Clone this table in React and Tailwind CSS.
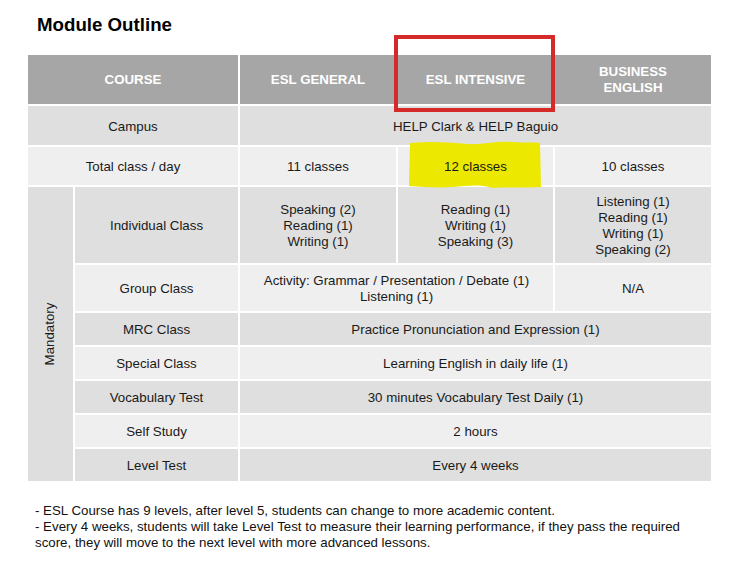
const dark = "bg-[#dfdfdf]";
const light = "bg-[#efefef]";

const Cell = ({ className = "", children }) => (
  <div className={`flex items-center justify-center text-center leading-[16px] ${className}`}>
    {children}
  </div>
);

const Highlight = () => (
  <svg className="absolute left-[10px] top-[-7px]" width="134" height="50" viewBox="0 0 134 50">
    <path
      d="M2 3 C20 1 40 2 60 4 C75 5 85 1 105 2 C118 3 126 2 132 3 L133 47 C120 48 100 47 85 48 C70 44 60 46 45 47 C30 48 15 47 1 46 Z"
      fill="#ece800"
    />
  </svg>
);

const App = () => {
  return (
    <div className="relative w-[753px] h-[585px] bg-white text-[#1a1a1a] font-['Liberation_Sans',Arial,sans-serif]">
      <h1 className="pl-[37px] pt-[14px] text-[18.7px] font-bold leading-[22px] text-black">Module Outline</h1>

      <div className="ml-[28px] mt-[19px] w-[683px] grid grid-cols-[45px_163px_156px_155px_156px] grid-rows-[49px_39px_38px_76px_46px_32px_32px_32px_32px_32px] gap-[2px] text-[13.3px]">
        {/* header */}
        <Cell className="col-span-2 bg-[#a6a6a6] text-white font-bold">COURSE</Cell>
        <Cell className="bg-[#a6a6a6] text-white font-bold">ESL GENERAL</Cell>
        <Cell className="bg-[#a6a6a6] text-white font-bold">ESL INTENSIVE</Cell>
        <Cell className="bg-[#a6a6a6] text-white font-bold">
          BUSINESS
          <br />
          ENGLISH
        </Cell>

        {/* campus */}
        <Cell className={`col-span-2 pt-[2px] ${dark}`}>Campus</Cell>
        <Cell className={`col-span-3 pt-[2px] ${dark}`}>HELP Clark &amp; HELP Baguio</Cell>

        {/* total */}
        <Cell className={`col-span-2 pt-[2px] ${light}`}>Total class / day</Cell>
        <Cell className={`pt-[2px] ${light}`}>11 classes</Cell>
        <Cell className={`relative pt-[2px] ${light}`}>
          <Highlight />
          <span className="relative">12 classes</span>
        </Cell>
        <Cell className={`pt-[2px] ${light}`}>10 classes</Cell>

        {/* mandatory */}
        <Cell className="row-span-7 bg-[#dedede]">
          <span className="-rotate-90 whitespace-nowrap">Mandatory</span>
        </Cell>

        <Cell className={`pt-[2px] ${dark}`}>Individual Class</Cell>
        <Cell className={`pt-[2px] ${dark}`}>
          Speaking (2)
          <br />
          Reading (1)
          <br />
          Writing (1)
        </Cell>
        <Cell className={`pt-[2px] ${dark}`}>
          Reading (1)
          <br />
          Writing (1)
          <br />
          Speaking (3)
        </Cell>
        <Cell className={`pt-[2px] ${dark}`}>
          Listening (1)
          <br />
          Reading (1)
          <br />
          Writing (1)
          <br />
          Speaking (2)
        </Cell>

        <Cell className={`pt-[2px] ${light}`}>Group Class</Cell>
        <Cell className={`col-span-2 pt-[2px] ${light}`}>
          Activity: Grammar / Presentation / Debate (1)
          <br />
          Listening (1)
        </Cell>
        <Cell className={`pt-[2px] ${light}`}>N/A</Cell>

        <Cell className={`pt-[2px] ${dark}`}>MRC Class</Cell>
        <Cell className={`col-span-3 pt-[2px] ${dark}`}>Practice Pronunciation and Expression (1)</Cell>

        <Cell className={`pt-[2px] ${light}`}>Special Class</Cell>
        <Cell className={`col-span-3 pt-[2px] ${light}`}>Learning English in daily life (1)</Cell>

        <Cell className={`pt-[2px] ${dark}`}>Vocabulary Test</Cell>
        <Cell className={`col-span-3 pt-[2px] ${dark}`}>30 minutes Vocabulary Test Daily (1)</Cell>

        <Cell className={`pt-[2px] ${light}`}>Self Study</Cell>
        <Cell className={`col-span-3 pt-[2px] ${light}`}>2 hours</Cell>

        <Cell className={`pt-[2px] ${dark}`}>Level Test</Cell>
        <Cell className={`col-span-3 pt-[2px] ${dark}`}>Every 4 weeks</Cell>
      </div>

      <div className="pl-[35px] pt-[22px] text-[13.3px] leading-[16px] text-[#111]">
        <p>- ESL Course has 9 levels, after level 5, students can change to more academic content.</p>
        <p>
          - Every 4 weeks, students will take Level Test to measure their learning performance, if they pass the required
          <br />
          score, they will move to the next level with more advanced lessons.
        </p>
      </div>

      {/* annotation box */}
      <div className="absolute left-[394px] top-[35px] w-[161px] h-[77px] border-4 border-[#d42a2a]" />
    </div>
  );
};

export default App;
